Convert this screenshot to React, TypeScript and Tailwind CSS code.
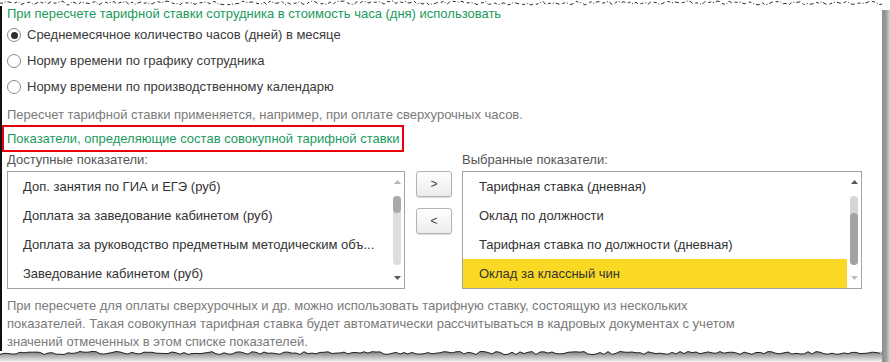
import React from 'react';

// deterministic jitter for the torn paper edges
const makeEdge = (width: number, step: number, min: number, max: number, seed: number) => {
  let s = seed;
  const pts: string[] = [];
  for (let x = 0; x <= width; x += step) {
    s = (s * 9301 + 49297) % 233280;
    const y = min + (s / 233280) * (max - min);
    pts.push(`${x},${y.toFixed(1)}`);
  }
  return pts;
};

const topEdge = makeEdge(882, 3, 1, 5, 7).join(' ');
const bottomPts = makeEdge(882, 4, 0.5, 3.5, 19);
const bottomEdge = bottomPts.join(' ');

const Radio = ({ checked, label }: { checked?: boolean; label: string }) => (
  <div className="h-[26px] flex items-center pl-[5px]">
    <div className="w-[14px] h-[14px] rounded-full border border-[#8a8a8a] bg-white flex items-center justify-center">
      {checked && <div className="w-[7px] h-[7px] rounded-full bg-[#2e2e2e]" />}
    </div>
    <span className="ml-[6px] text-[#3a3a3a]">{label}</span>
  </div>
);

const Arrow = ({ up, color }: { up?: boolean; color: string }) => (
  <svg width="7" height="4" viewBox="0 0 7 4">
    <path d={up ? 'M3.5 0 L7 4 L0 4Z' : 'M0 0 L7 0 L3.5 4Z'} fill={color} />
  </svg>
);

const ScrollBar = ({ thumbTop }: { thumbTop: boolean }) => (
  <div className="w-[8px] flex flex-col items-center pt-[8px]">
    <Arrow up color={thumbTop ? '#b4b4b4' : '#555555'} />
    <div className="h-[12px]" />
    {thumbTop ? (
      <div className="w-[8px] h-[69px] rounded-full bg-[#dedede] flex flex-col">
        <div className="h-[17px] rounded-full bg-[#a9a9a9]" />
      </div>
    ) : (
      <div className="w-[8px] h-[69px] rounded-full bg-[#d6d6d6] flex flex-col">
        <div className="h-[17px]" />
        <div className="flex-1 rounded-full bg-[#a2a2a2]" />
      </div>
    )}
    <div className="h-[11px]" />
    <Arrow color={thumbTop ? '#555555' : '#bdbdbd'} />
  </div>
);

const ListBox = ({
  items,
  selected,
  thumbTop,
  pad,
}: {
  items: string[];
  selected?: number;
  thumbTop: boolean;
  pad: string;
}) => (
  <div className="h-[118px] border border-[#a3a3a3] flex">
    <div className="flex-1 flex flex-col">
      {items.map((item, i) => (
        <div
          key={item}
          className={`h-[29px] flex items-center ${pad} text-[#333333] whitespace-nowrap ${
            i === selected ? 'bg-[#f9d923]' : ''
          }`}
        >
          {item}
        </div>
      ))}
    </div>
    <div className="w-[14px] flex justify-center">
      <ScrollBar thumbTop={thumbTop} />
    </div>
  </div>
);

const MoveButton = ({ label }: { label: string }) => (
  <div className="w-[36px] h-[26px] rounded-[3px] border border-[#b3b3b3] bg-gradient-to-b from-white to-[#ececec] shadow-[0_1px_1px_rgba(0,0,0,0.15)] flex items-center justify-center text-[#444] text-[12px]">
    {label}
  </div>
);

export default function App() {
  return (
    <div className="w-[890px] h-[362px] bg-white flex overflow-hidden font-['Liberation_Sans',Arial,sans-serif] text-[13px] leading-[16px]">
      <div className="w-[882px] flex flex-col">
        {/* Top torn edge */}
        <svg width="882" height="6" className="block shrink-0">
          <polyline points={topEdge} fill="none" stroke="#2a2a2a" strokeWidth="1" strokeDasharray="3 2 1 2 4 3" />
        </svg>

        <div className="flex-1 border-l-2 border-[#111] flex flex-col">
          <div className="h-[16px] pl-[5px] text-[#1a9a5c]">
            При пересчете тарифной ставки сотрудника в стоимость часа (дня) использовать
          </div>

          <Radio checked label="Среднемесячное количество часов (дней) в месяце" />
          <Radio label="Норму времени по графику сотрудника" />
          <Radio label="Норму времени по производственному календарю" />

          <div className="h-[25px] pt-[7px] pl-[5px] text-[#7a7a7a]">
            Пересчет тарифной ставки применяется, например, при оплате сверхурочных часов.
          </div>

          <div className="h-[27px] w-[402px] border-2 border-[#e8000b] flex items-center pl-[3px] text-[#1a9a5c]">
            Показатели, определяющие состав совокупной тарифной ставки
          </div>

          <div className="flex pl-[5px]">
            <div className="w-[398px] flex flex-col">
              <div className="h-[19px] text-[#555555]">Доступные показатели:</div>
              <ListBox
                thumbTop
                pad="pl-[15px]"
                items={[
                  'Доп. занятия по ГИА и ЕГЭ (руб)',
                  'Доплата за заведование кабинетом (руб)',
                  'Доплата за руководство предметным методическим объ...',
                  'Заведование кабинетом (руб)',
                ]}
              />
            </div>
            <div className="ml-[11px] pt-[19px] flex flex-col gap-[11px]">
              <MoveButton label=">" />
              <MoveButton label="<" />
            </div>
            <div className="ml-[10px] w-[400px] flex flex-col">
              <div className="h-[19px] text-[#555555]">Выбранные показатели:</div>
              <ListBox
                thumbTop={false}
                selected={3}
                pad="pl-[16px]"
                items={[
                  'Тарифная ставка (дневная)',
                  'Оклад по должности',
                  'Тарифная ставка по должности (дневная)',
                  'Оклад за классный чин',
                ]}
              />
            </div>
          </div>

          <div className="pt-[8px] pl-[5px] leading-[18px] text-[#7a7a7a]">
            При пересчете для оплаты сверхурочных и др. можно использовать тарифную ставку, состоящую из нескольких
            <br />
            показателей. Такая совокупная тарифная ставка будет автоматически рассчитываться в кадровых документах с учетом
            <br />
            значений отмеченных в этом списке показателей.
          </div>
        </div>

        {/* Bottom torn edge with its shadow */}
        <svg width="882" height="12" className="block shrink-0">
          <defs>
            <linearGradient id="bshadow" x1="0" y1="0" x2="0" y2="1">
              <stop offset="0" stopColor="#7a7a7a" />
              <stop offset="1" stopColor="#ffffff" />
            </linearGradient>
          </defs>
          <rect x="0" y="0" width="882" height="12" fill="url(#bshadow)" />
          <polygon points={`0,0 ${bottomEdge} 882,0`} fill="#ffffff" />
          <polyline points={bottomEdge} fill="none" stroke="#222" strokeWidth="1" />
        </svg>
      </div>

      {/* Right shadow */}
      <div className="w-[8px] mt-[10px] bg-gradient-to-r from-[#8c8c8c] via-[#9c9c9c] to-[#d6d6d6]" />
    </div>
  );
}
